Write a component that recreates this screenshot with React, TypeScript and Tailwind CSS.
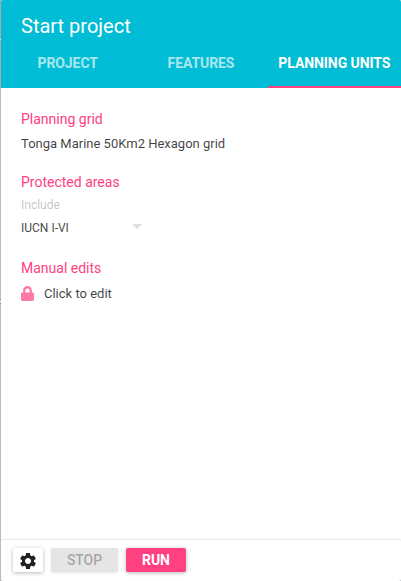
import { FaLock } from 'react-icons/fa';
import { MdSettings } from 'react-icons/md';

const tabs = [
  { label: 'PROJECT', active: false },
  { label: 'FEATURES', active: false },
  { label: 'PLANNING UNITS', active: true },
];

function Heading({ children }: { children: string }) {
  return <h2 className="text-[14px] leading-5 text-[#ff4081]">{children}</h2>;
}

// Sliver of the map that shows beside the panel.
function MapEdge() {
  return (
    <div className="flex w-px shrink-0 flex-col bg-[#aebfca]">
      <div className="h-[39px] bg-[#a3a9ac]" />
      <div className="h-px bg-[#d5e5e8]" />
      <div className="h-[48px] bg-[#a9adb2]" />
      <div className="h-[211px]" />
      <div className="h-px bg-[#808890]" />
      <div className="h-[3px] bg-[#e0dcda]" />
      <div className="h-px bg-[#808890]" />
    </div>
  );
}

export default function App() {
  return (
    <div className="flex h-[581px] w-[401px] overflow-hidden bg-[#aebfca] font-[Roboto,sans-serif]">
      <MapEdge />
      <div className="flex w-[400px] flex-col overflow-hidden rounded-[2px] bg-white">
        <header className="flex h-[88px] shrink-0 flex-col bg-[#00bcd4]">
          <h1 className="h-[38px] pt-[14px] pl-5 text-[20px] leading-6 text-white">Start project</h1>
          <nav className="grid h-[50px] grid-cols-3">
            {tabs.map((tab) => (
              <div
                key={tab.label}
                className={
                  tab.active
                    ? 'flex justify-center border-b-2 border-[#ff4081] pt-[15px] text-[14px] leading-5 font-bold tracking-[-0.08px] whitespace-nowrap text-white'
                    : 'flex justify-center pt-[15px] text-[14px] leading-5 font-bold tracking-[-0.08px] whitespace-nowrap text-white/65'
                }
              >
                {tab.label}
              </div>
            ))}
          </nav>
        </header>

        <main className="flex grow flex-col px-5 pt-[21px] text-[13px] text-black/75">
          <Heading>Planning grid</Heading>
          <p className="mt-[5px] leading-5">Tonga Marine 50Km2 Hexagon grid</p>
          <div className="mt-[18px]">
            <Heading>Protected areas</Heading>
          </div>
          <label className="mt-[3px] text-[12px] leading-5 text-black/25">Include</label>
          <div className="mt-[3px] flex w-[121px] items-center justify-between text-[12px] leading-5">
            <span>IUCN I-VI</span>
            <svg className="mb-[3px] h-[5px] w-[10px] fill-[#e0e0e0]" viewBox="0 0 10 5">
              <path d="M0 0h10L5 5z" />
            </svg>
          </div>
          <div className="mt-5">
            <Heading>Manual edits</Heading>
          </div>
          <div className="mt-[6px] flex items-center leading-5">
            <FaLock className="mr-[10px] mb-[2px] h-[15px] w-[13px] text-[#ff79a7]" />
            <span>Click to edit</span>
          </div>
        </main>

        <footer className="flex h-[41px] shrink-0 gap-2 rounded-[2px] bg-white pt-2 pl-3 text-[14px] font-bold tracking-[-0.08px] shadow-[0_0_3px_rgba(0,0,0,0.22)]">
          <button className="flex h-6 w-[30px] items-center justify-center rounded-[2px] bg-white text-[#212121] shadow-[0_1px_4px_rgba(0,0,0,0.28)]">
            <MdSettings className="mt-[2px] size-5" />
          </button>
          <button className="h-6 w-[67px] rounded-[2px] bg-[#e5e5e5] font-medium text-black/30 shadow-[0_1px_3px_rgba(0,0,0,0.1)]">STOP</button>
          <button className="h-6 w-[60px] rounded-[2px] bg-[#ff4081] text-white shadow-[0_1px_4px_rgba(0,0,0,0.28)]">RUN</button>
        </footer>
      </div>
    </div>
  );
}
